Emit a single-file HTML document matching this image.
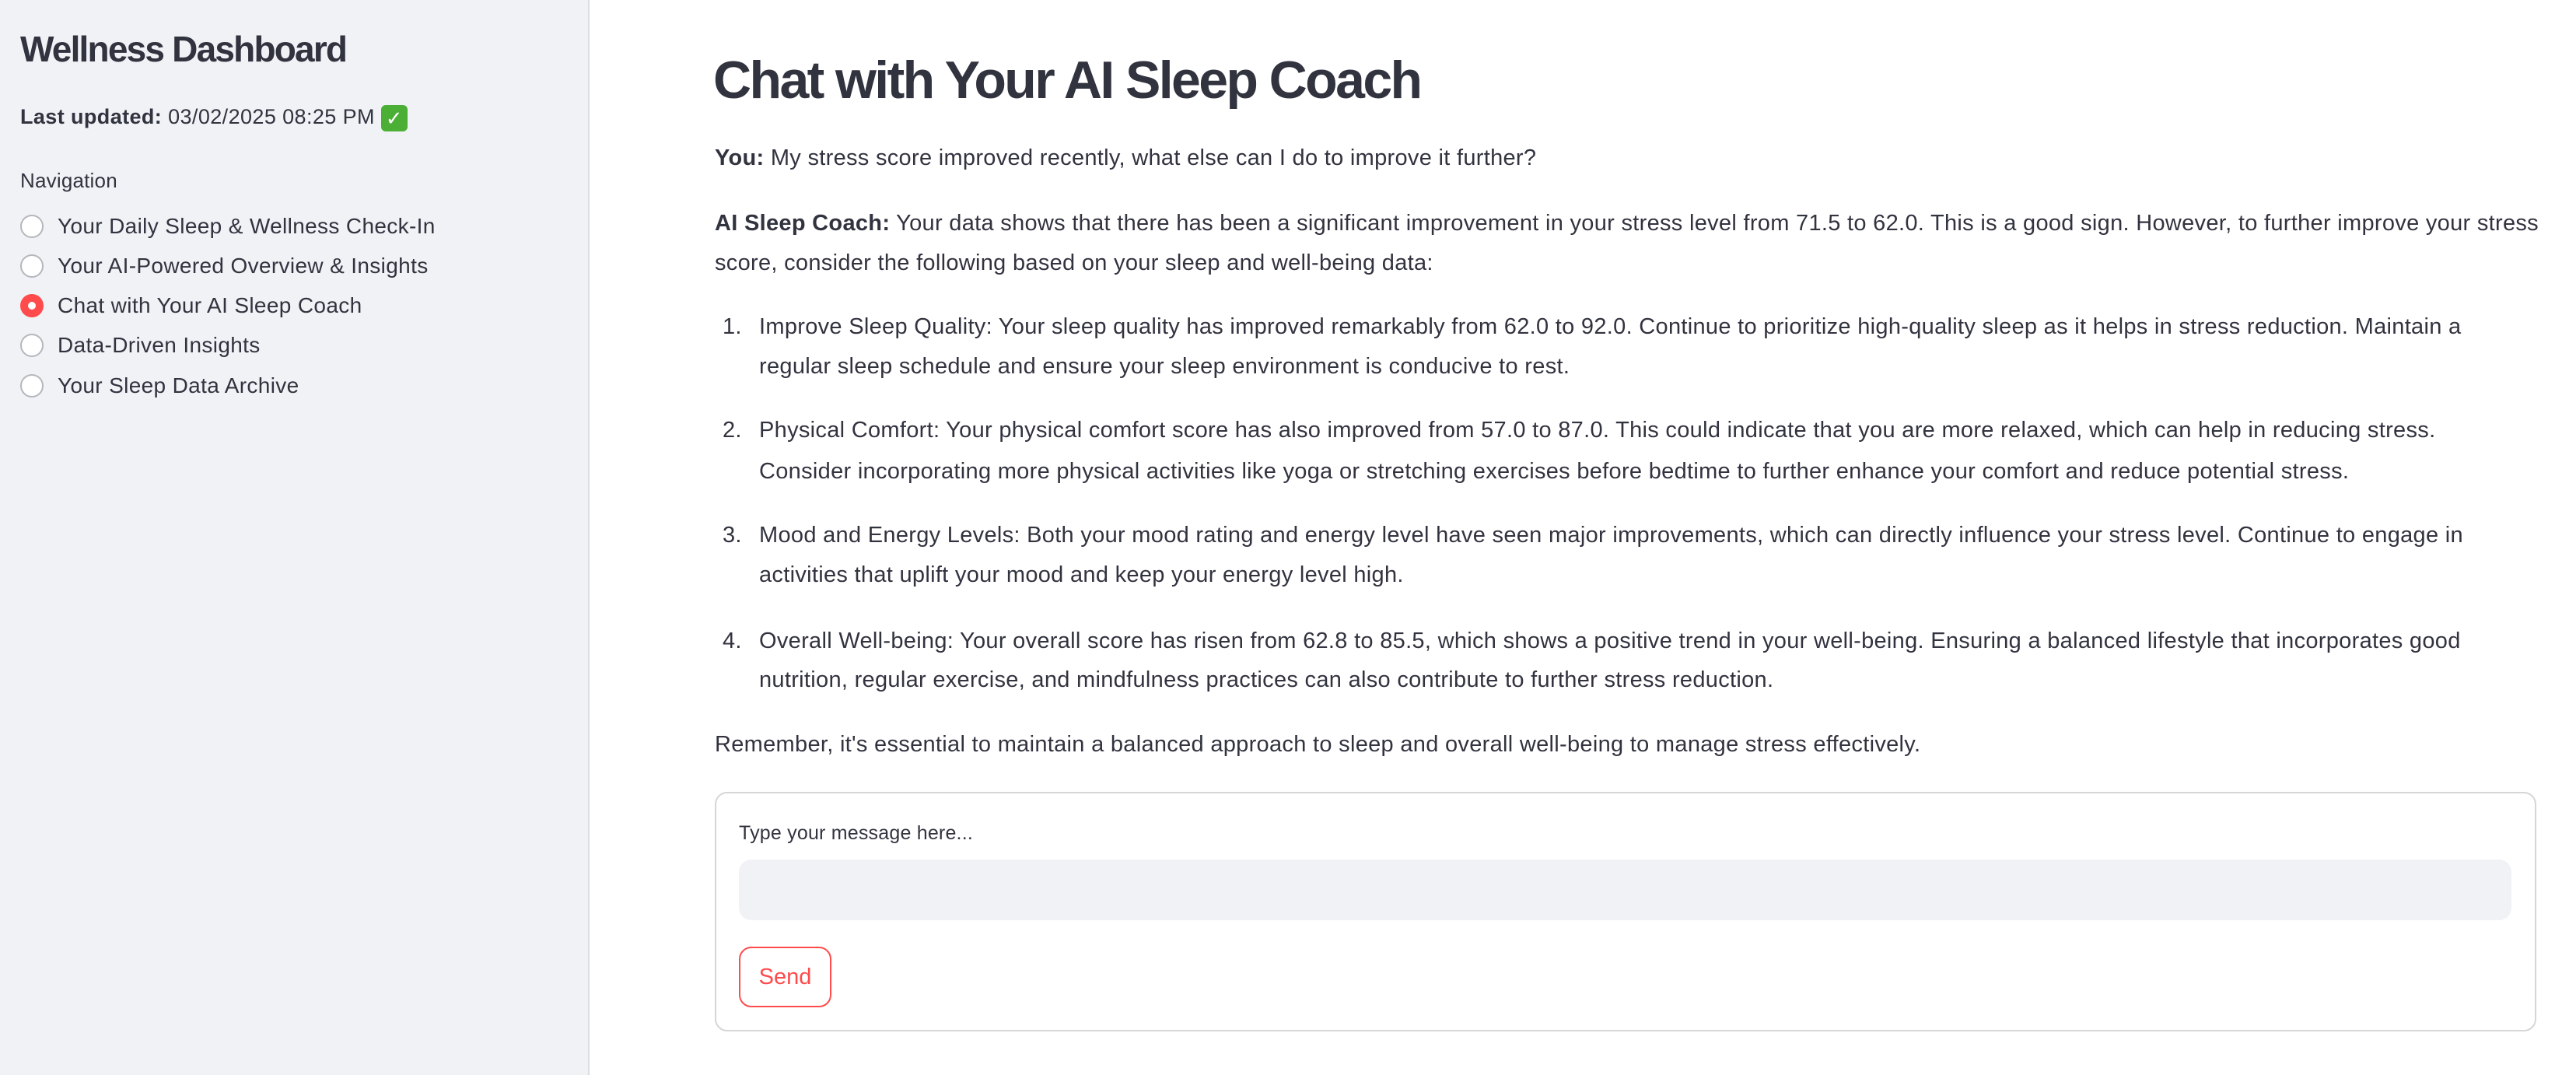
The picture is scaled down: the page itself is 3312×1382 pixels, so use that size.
<!DOCTYPE html>
<html><head><meta charset="utf-8"><style>
*{margin:0;padding:0;box-sizing:border-box}
body{width:3312px;height:1382px;background:#fff;font-family:"Liberation Sans",sans-serif;color:#31333f;position:relative;overflow:hidden}
.sb{position:absolute;left:0;top:0;width:758px;height:1382px;background:#f0f2f6;border-right:2px solid #dcdde2}
.a{position:absolute;white-space:nowrap;line-height:50px;height:50px}
.t{font-size:29px;letter-spacing:0.3px}
.r{position:absolute;width:30px;height:30px;border-radius:50%;border:2px solid #b5b7bd;background:#fff;left:26px}
.r.on{background:#ff4b4b;border:none}
.r.on::after{content:"";position:absolute;left:10px;top:10px;width:10px;height:10px;border-radius:50%;background:#fff}
.nl{font-size:28px;left:74px;letter-spacing:0.35px}
</style></head><body>
<div class="sb"></div>
<div class="a" style="left:26px;top:38px;font-size:46px;font-weight:bold;letter-spacing:-1.8px">Wellness Dashboard</div>
<div class="a" style="left:26px;top:125px;font-size:27px;letter-spacing:0.4px"><b>Last updated:</b> 03/02/2025 08:25 PM <span style="display:inline-block;width:34px;height:34px;background:#4caf35;border-radius:6px;color:#fff;text-align:center;line-height:34px;font-size:26px;vertical-align:-2px">✓</span></div>
<div class="a" style="left:26px;top:207px;font-size:26px;letter-spacing:0.2px">Navigation</div>
<div class="r" style="top:276px"></div><div class="a nl" style="top:266px">Your Daily Sleep &amp; Wellness Check-In</div>
<div class="r" style="top:327px"></div><div class="a nl" style="top:317px">Your AI-Powered Overview &amp; Insights</div>
<div class="r on" style="top:378px"></div><div class="a nl" style="top:368px">Chat with Your AI Sleep Coach</div>
<div class="r" style="top:429px"></div><div class="a nl" style="top:419px">Data-Driven Insights</div>
<div class="r" style="top:481px"></div><div class="a nl" style="top:471px">Your Sleep Data Archive</div>

<div class="a" style="left:917px;top:68px;height:70px;line-height:70px;font-size:68px;font-weight:bold;letter-spacing:-2.6px">Chat with Your AI Sleep Coach</div>
<div class="a t" style="left:919px;top:178px"><b>You:</b> My stress score improved recently, what else can I do to improve it further?</div>
<div class="a t" style="left:919px;top:262px"><b>AI Sleep Coach:</b> Your data shows that there has been a significant improvement in your stress level from 71.5 to 62.0. This is a good sign. However, to further improve your stress</div>
<div class="a t" style="left:919px;top:313px">score, consider the following based on your sleep and well-being data:</div>

<div class="a t" style="left:929px;top:395px">1.</div>
<div class="a t" style="left:976px;top:395px">Improve Sleep Quality: Your sleep quality has improved remarkably from 62.0 to 92.0. Continue to prioritize high-quality sleep as it helps in stress reduction. Maintain a</div>
<div class="a t" style="left:976px;top:446px">regular sleep schedule and ensure your sleep environment is conducive to rest.</div>
<div class="a t" style="left:929px;top:528px">2.</div>
<div class="a t" style="left:976px;top:528px">Physical Comfort: Your physical comfort score has also improved from 57.0 to 87.0. This could indicate that you are more relaxed, which can help in reducing stress.</div>
<div class="a t" style="left:976px;top:581px">Consider incorporating more physical activities like yoga or stretching exercises before bedtime to further enhance your comfort and reduce potential stress.</div>
<div class="a t" style="left:929px;top:663px">3.</div>
<div class="a t" style="left:976px;top:663px">Mood and Energy Levels: Both your mood rating and energy level have seen major improvements, which can directly influence your stress level. Continue to engage in</div>
<div class="a t" style="left:976px;top:714px">activities that uplift your mood and keep your energy level high.</div>
<div class="a t" style="left:929px;top:799px">4.</div>
<div class="a t" style="left:976px;top:799px">Overall Well-being: Your overall score has risen from 62.8 to 85.5, which shows a positive trend in your well-being. Ensuring a balanced lifestyle that incorporates good</div>
<div class="a t" style="left:976px;top:849px">nutrition, regular exercise, and mindfulness practices can also contribute to further stress reduction.</div>
<div class="a t" style="left:919px;top:932px">Remember, it's essential to maintain a balanced approach to sleep and overall well-being to manage stress effectively.</div>

<div style="position:absolute;left:919px;top:1018px;width:2342px;height:308px;border:2px solid #d6d6d9;border-radius:16px"></div>
<div class="a" style="left:950px;top:1046px;font-size:25px;letter-spacing:0.2px">Type your message here...</div>
<div style="position:absolute;left:950px;top:1105px;width:2279px;height:78px;background:#f0f2f6;border-radius:16px"></div>
<div style="position:absolute;left:950px;top:1217px;width:119px;height:78px;border:2px solid #ff4b4b;border-radius:16px;color:#ff4b4b;font-size:29px;text-align:center;line-height:74px">Send</div>
</body></html>
